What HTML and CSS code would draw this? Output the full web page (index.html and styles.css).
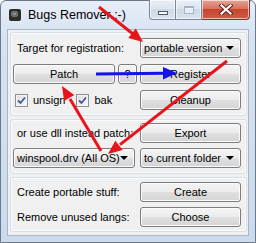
FILE: index.html
```html
<!DOCTYPE html>
<html>
<head>
    <title>Bugs Remover</title>
    <link rel="stylesheet" href="styles.css">
</head>
<body>
    <div class="window">
        <div class="titlebar">
            <div class="app-icon"><span class="disc"></span></div>
            <div class="title">Bugs Remover :-)</div>
            <div class="caption">
                <div class="cap cap-min"><span class="glyph-min"></span></div>
                <div class="cap cap-max"><span class="glyph-max"></span></div>
                <div class="cap cap-close">
                    <svg width="14" height="11" viewBox="0 0 14 11">
                        <path d="M2.5 1.5 L11.5 9.5 M11.5 1.5 L2.5 9.5" stroke="#5a2018" stroke-width="4" stroke-linecap="square"/>
                        <path d="M2.5 1.5 L11.5 9.5 M11.5 1.5 L2.5 9.5" stroke="#fff" stroke-width="2.2" stroke-linecap="square"/>
                    </svg>
                </div>
            </div>
        </div>

        <div class="client">
            <div class="group g1">
                <div class="row">
                    <span class="label">Target for registration:</span>
                    <div class="combo side">portable version<span class="arrow"></span></div>
                </div>
                <div class="row">
                    <div class="btn patch">Patch</div>
                    <div class="btn help">?</div>
                    <div class="btn side">Register</div>
                </div>
                <div class="row">
                    <div class="check">
                        <span class="box"><svg width="11" height="11" viewBox="0 0 11 11"><path d="M2 5.5 L4.5 8 L9 2.5" fill="none" stroke="#40589a" stroke-width="1.8"/></svg></span>
                        unsign
                    </div>
                    <div class="check">
                        <span class="box"><svg width="11" height="11" viewBox="0 0 11 11"><path d="M2 5.5 L4.5 8 L9 2.5" fill="none" stroke="#40589a" stroke-width="1.8"/></svg></span>
                        bak
                    </div>
                    <div class="btn side push">Cleanup</div>
                </div>
            </div>

            <div class="group g2">
                <div class="row">
                    <span class="label">or use dll instead patch:</span>
                    <div class="btn side">Export</div>
                </div>
                <div class="row">
                    <div class="combo dll">winspool.drv (All OS)<span class="arrow"></span></div>
                    <div class="combo side push">to current folder<span class="arrow"></span></div>
                </div>
            </div>

            <div class="group g3">
                <div class="row">
                    <span class="label">Create portable stuff:</span>
                    <div class="btn side">Create</div>
                </div>
                <div class="row">
                    <span class="label">Remove unused langs:</span>
                    <div class="btn side">Choose</div>
                </div>
            </div>
        </div>

        <!-- hand drawn marks on top of the dialog -->
        <svg class="marks" width="256" height="243" viewBox="0 0 256 243">
            <g stroke="#e8141a" stroke-width="3" fill="#e8141a">
                <line x1="99" y1="7" x2="133" y2="34"/>
                <polygon points="143,42 128.3,38 135.8,28.6" stroke="none"/>
                <line x1="227" y1="61" x2="120" y2="144.6"/>
                <polygon points="108,154 122.7,150.1 115.3,140.7" stroke="none"/>
                <line x1="101" y1="151" x2="70" y2="99"/>
                <polygon points="62,86 74.3,94.9 64.1,101.1" stroke="none"/>
            </g>
            <g stroke="#1414e6" stroke-width="3" fill="#1414e6">
                <line x1="96" y1="74" x2="164" y2="73.2"/>
                <polygon points="177,73 163,67 163,79.5" stroke="none"/>
            </g>
        </svg>
    </div>
</body>
</html>
```

FILE: styles.css
```css
* {
    box-sizing: border-box;
}

body {
    margin: 0;
    font-family: "Liberation Sans", Arial, sans-serif;
    font-size: 11px;
    color: #000;
    background: #fff;
}

.window {
    position: relative;
    width: 256px;
    height: 243px;
    border: 1px solid #6b7889;
    border-radius: 6px 6px 0 0;
    background: linear-gradient(#e6eef8, #d5e2f1 40px, #cbdbed);
    display: flex;
    flex-direction: column;
}

.titlebar {
    height: 28px;
    display: flex;
    padding-left: 8px;
}

.app-icon {
    width: 12px;
    height: 12px;
    margin-top: 8px;
    background: #2c2c2c;
    border-radius: 2px;
    position: relative;
}

.disc {
    position: absolute;
    left: 2px;
    top: 2px;
    width: 7px;
    height: 6px;
    border-radius: 50%;
    background: #9a9a9a;
    box-shadow: inset 0 0 0 2px #6d6d6d;
}

.title {
    margin-left: 7px;
    margin-top: 7px;
    font-size: 12.5px;
}

.caption {
    margin-left: auto;
    margin-right: 5px;
    margin-top: -1px;
    display: flex;
    height: 20px;
}

.cap {
    height: 20px;
    border: 1px solid #7a8799;
    border-top: none;
    display: flex;
    align-items: center;
    justify-content: center;
    box-shadow: inset 0 0 0 1px rgba(255, 255, 255, 0.6);
}

.cap-min {
    width: 27px;
    border-radius: 0 0 0 4px;
    background: linear-gradient(#e9eff6, #dbe4ef 50%, #cdd9e7 50%, #d8e3ef);
}

.cap-max {
    width: 26px;
    border-left: none;
    background: linear-gradient(#e9eff6, #dbe4ef 50%, #cdd9e7 50%, #d8e3ef);
}

.cap-close {
    width: 48px;
    border-left: none;
    border-color: #6e3a33;
    border-radius: 0 0 4px 0;
    background: linear-gradient(#e6a597, #d7725f 45%, #c6452f 50%, #cf5c45);
}

.glyph-min {
    width: 10px;
    height: 4px;
    margin-top: 6px;
    background: #fff;
    border: 1px solid #4d5a6a;
}

.glyph-max {
    width: 10px;
    height: 8px;
    border: 1px solid #a9b5c4;
    border-top-width: 2px;
    background: rgba(255, 255, 255, 0.5);
}

.client {
    flex: 1;
    margin: 0 6px 6px 6px;
    background: #f0f0f0;
    border: 1px solid #a7b6c8;
    padding: 2px 1px 3px 2px;
    display: flex;
    flex-direction: column;
    gap: 3px;
}

.group {
    border: 1px solid #d5dfe5;
    border-radius: 3px;
    box-shadow: inset 0 0 0 1px #fafbfc;
    display: flex;
    flex-direction: column;
}

.g1 {
    height: 84px;
    padding: 5px 5px 5px 2px;
    gap: 6px;
}

.g2 {
    height: 55px;
    padding: 3px 5px 5px 2px;
    gap: 5px;
}

.g3 {
    height: 55px;
    padding: 4px 5px 4px 2px;
    gap: 5px;
}

.row {
    height: 20px;
    display: flex;
    align-items: center;
}

.label {
    flex: 1;
    padding-left: 4px;
}

.btn, .combo {
    height: 20px;
    border: 1px solid #7d7d7d;
    border-radius: 3px;
    background: linear-gradient(#f4f4f4, #ececec 50%, #e0e0e0 50%, #d4d4d4);
    box-shadow: inset 0 0 0 1px #fbfbfb;
    display: flex;
    align-items: center;
    white-space: nowrap;
}

.btn {
    justify-content: center;
}

.combo {
    padding-left: 3px;
    position: relative;
}

.arrow {
    position: absolute;
    right: 6px;
    top: 7px;
    border-left: 4px solid transparent;
    border-right: 4px solid transparent;
    border-top: 4px solid #000;
}

.side {
    width: 101px;
    flex: none;
}

.push {
    margin-left: auto;
}

.patch {
    width: 102px;
}

.help {
    width: 19px;
    margin: 0 3px;
}

.dll {
    width: 122px;
}

.check {
    display: flex;
    align-items: center;
    margin-left: 2px;
    margin-right: 9px;
}

.box {
    width: 13px;
    height: 13px;
    margin-right: 5px;
    border: 1px solid #8e8f8f;
    background: linear-gradient(135deg, #dcdcdc, #fbfbfb);
    box-shadow: inset 0 0 0 1px #f4f4f4;
    display: flex;
    align-items: center;
    justify-content: center;
}

.marks {
    position: absolute;
    left: -1px;
    top: -1px;
    pointer-events: none;
}
```
